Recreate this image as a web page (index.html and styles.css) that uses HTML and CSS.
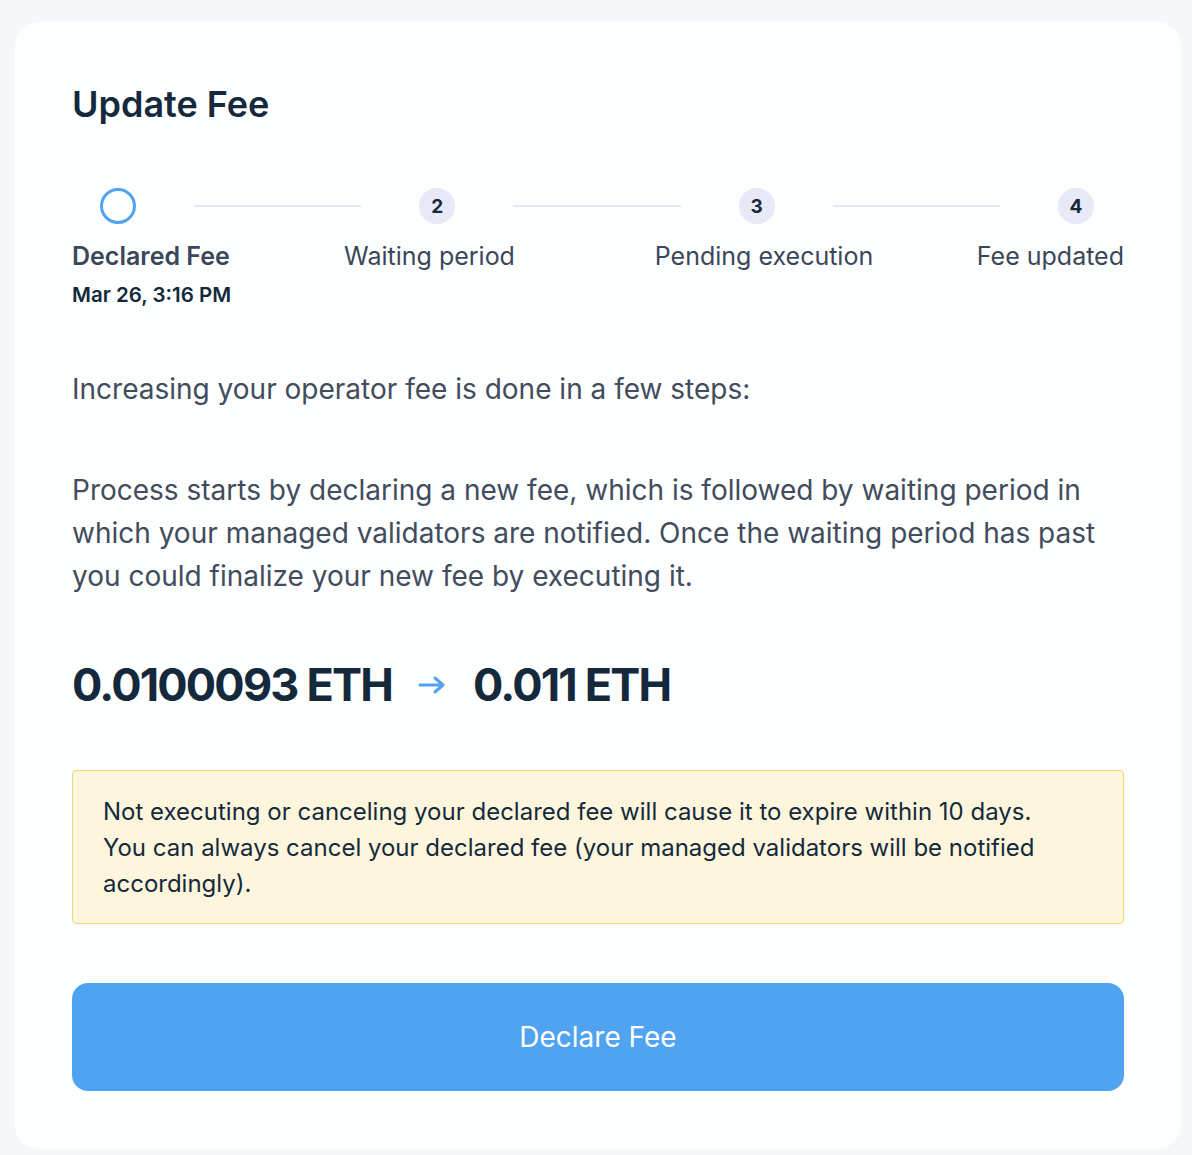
FILE: index.html
```
<!DOCTYPE html>
<html lang="en">
<head>
    <meta charset="UTF-8">
    <meta name="viewport" content="width=device-width, initial-scale=1.0">
    <title>Update Fee</title>
    <link rel="stylesheet" href="styles.css">
</head>
<body>
    <div class="card">
        <h1>Update Fee</h1>

        <!-- stepper: circles and connectors -->
        <div class="steps">
            <div class="step-circle current"></div>
            <div class="step-line"></div>
            <div class="step-circle">2</div>
            <div class="step-line"></div>
            <div class="step-circle">3</div>
            <div class="step-line"></div>
            <div class="step-circle">4</div>
        </div>
        <div class="step-labels">
            <div class="step-label first">
                <div class="label-title active">Declared Fee</div>
                <div class="label-date">Mar 26, 3:16 PM</div>
            </div>
            <div class="step-label middle"><div class="label-title">Waiting period</div></div>
            <div class="step-label middle"><div class="label-title">Pending execution</div></div>
            <div class="step-label last"><div class="label-title">Fee updated</div></div>
        </div>

        <p class="text intro">Increasing your operator fee is done in a few steps:</p>
        <p class="text">Process starts by declaring a new fee, which is followed by waiting period in which your managed validators are notified. Once the waiting period has past you could finalize your new fee by executing it.</p>

        <div class="fee-change">
            <span>0.0100093 ETH</span>
            <svg class="arrow" width="28" height="20" viewBox="0 0 28 20">
                <path d="M2 10 H25 M17 3 L25 10 L17 17" fill="none" stroke="#4fa3f1" stroke-width="3" stroke-linecap="round" stroke-linejoin="round"/>
            </svg>
            <span>0.011 ETH</span>
        </div>

        <div class="warning">
            Not executing or canceling your declared fee will cause it to expire within 10 days. You can always cancel your declared fee (your managed validators will be notified accordingly).
        </div>

        <button class="declare-btn">Declare Fee</button>
    </div>
</body>
</html>
```

FILE: styles.css
```
body {
    margin: 0;
    padding: 22px 11px 8px 15px;
    background-color: #f6f7fb;
    font-family: Inter, "Open Sans", sans-serif;
    color: #15293c;
}

.card {
    background-color: #fdfefe;
    border-radius: 24px;
    padding: 62px 57px 58px 57px;
}

h1 {
    margin: 0;
    font-size: 36px;
    line-height: 40px;
    font-weight: 600;
    color: #15293c;
}

/* stepper */
.steps {
    display: grid;
    grid-template-columns: 36px 1fr 36px 1fr 36px 1fr 36px;
    align-items: center;
    margin-top: 64px;
    padding: 0 30px 0 28px;
}

.step-circle {
    width: 36px;
    height: 36px;
    box-sizing: border-box;
    border-radius: 50%;
    background-color: #e8e9f7;
    display: flex;
    align-items: center;
    justify-content: center;
    font-size: 19px;
    font-weight: 700;
    color: #15293c;
}

.step-circle.current {
    background-color: transparent;
    border: 3px solid #4fa3f1;
}

.step-line {
    height: 2px;
    background-color: #e7e8f6;
    margin: 0 58px;
}

.step-labels {
    display: grid;
    grid-template-columns: 217px 281px 388px 1fr;
    margin-top: 16px;
}

.step-label.middle {
    text-align: center;
}

.step-label.last {
    text-align: right;
}

.label-title {
    font-size: 25px;
    line-height: 32px;
    color: #3a475b;
}

.label-title.active {
    font-weight: 600;
}

.label-date {
    margin-top: 9px;
    font-size: 20.5px;
    line-height: 28px;
    font-weight: 600;
    color: #15293c;
}

.text {
    margin: 58px 0 0 0;
    font-size: 28px;
    line-height: 43px;
    color: #414c5c;
}

.intro {
    margin-top: 59px;
}

.fee-change {
    margin-top: 59px;
    display: flex;
    align-items: center;
    font-size: 45px;
    line-height: 56px;
    font-weight: 700;
    letter-spacing: -1.8px;
    color: #15293c;
}

.arrow {
    margin: 0 27px 0 26px;
}

.warning {
    margin-top: 57px;
    background-color: #fdf6dc;
    border: 1px solid #f3d879;
    border-radius: 4px;
    padding: 23px 60px 21px 30px;
    font-size: 24px;
    line-height: 36px;
    color: #15293c;
}

.declare-btn {
    display: block;
    width: 100%;
    height: 108px;
    margin-top: 59px;
    border: none;
    border-radius: 16px;
    background-color: #4fa3f1;
    color: white;
    font-family: inherit;
    font-size: 28px;
    cursor: pointer;
}
```
